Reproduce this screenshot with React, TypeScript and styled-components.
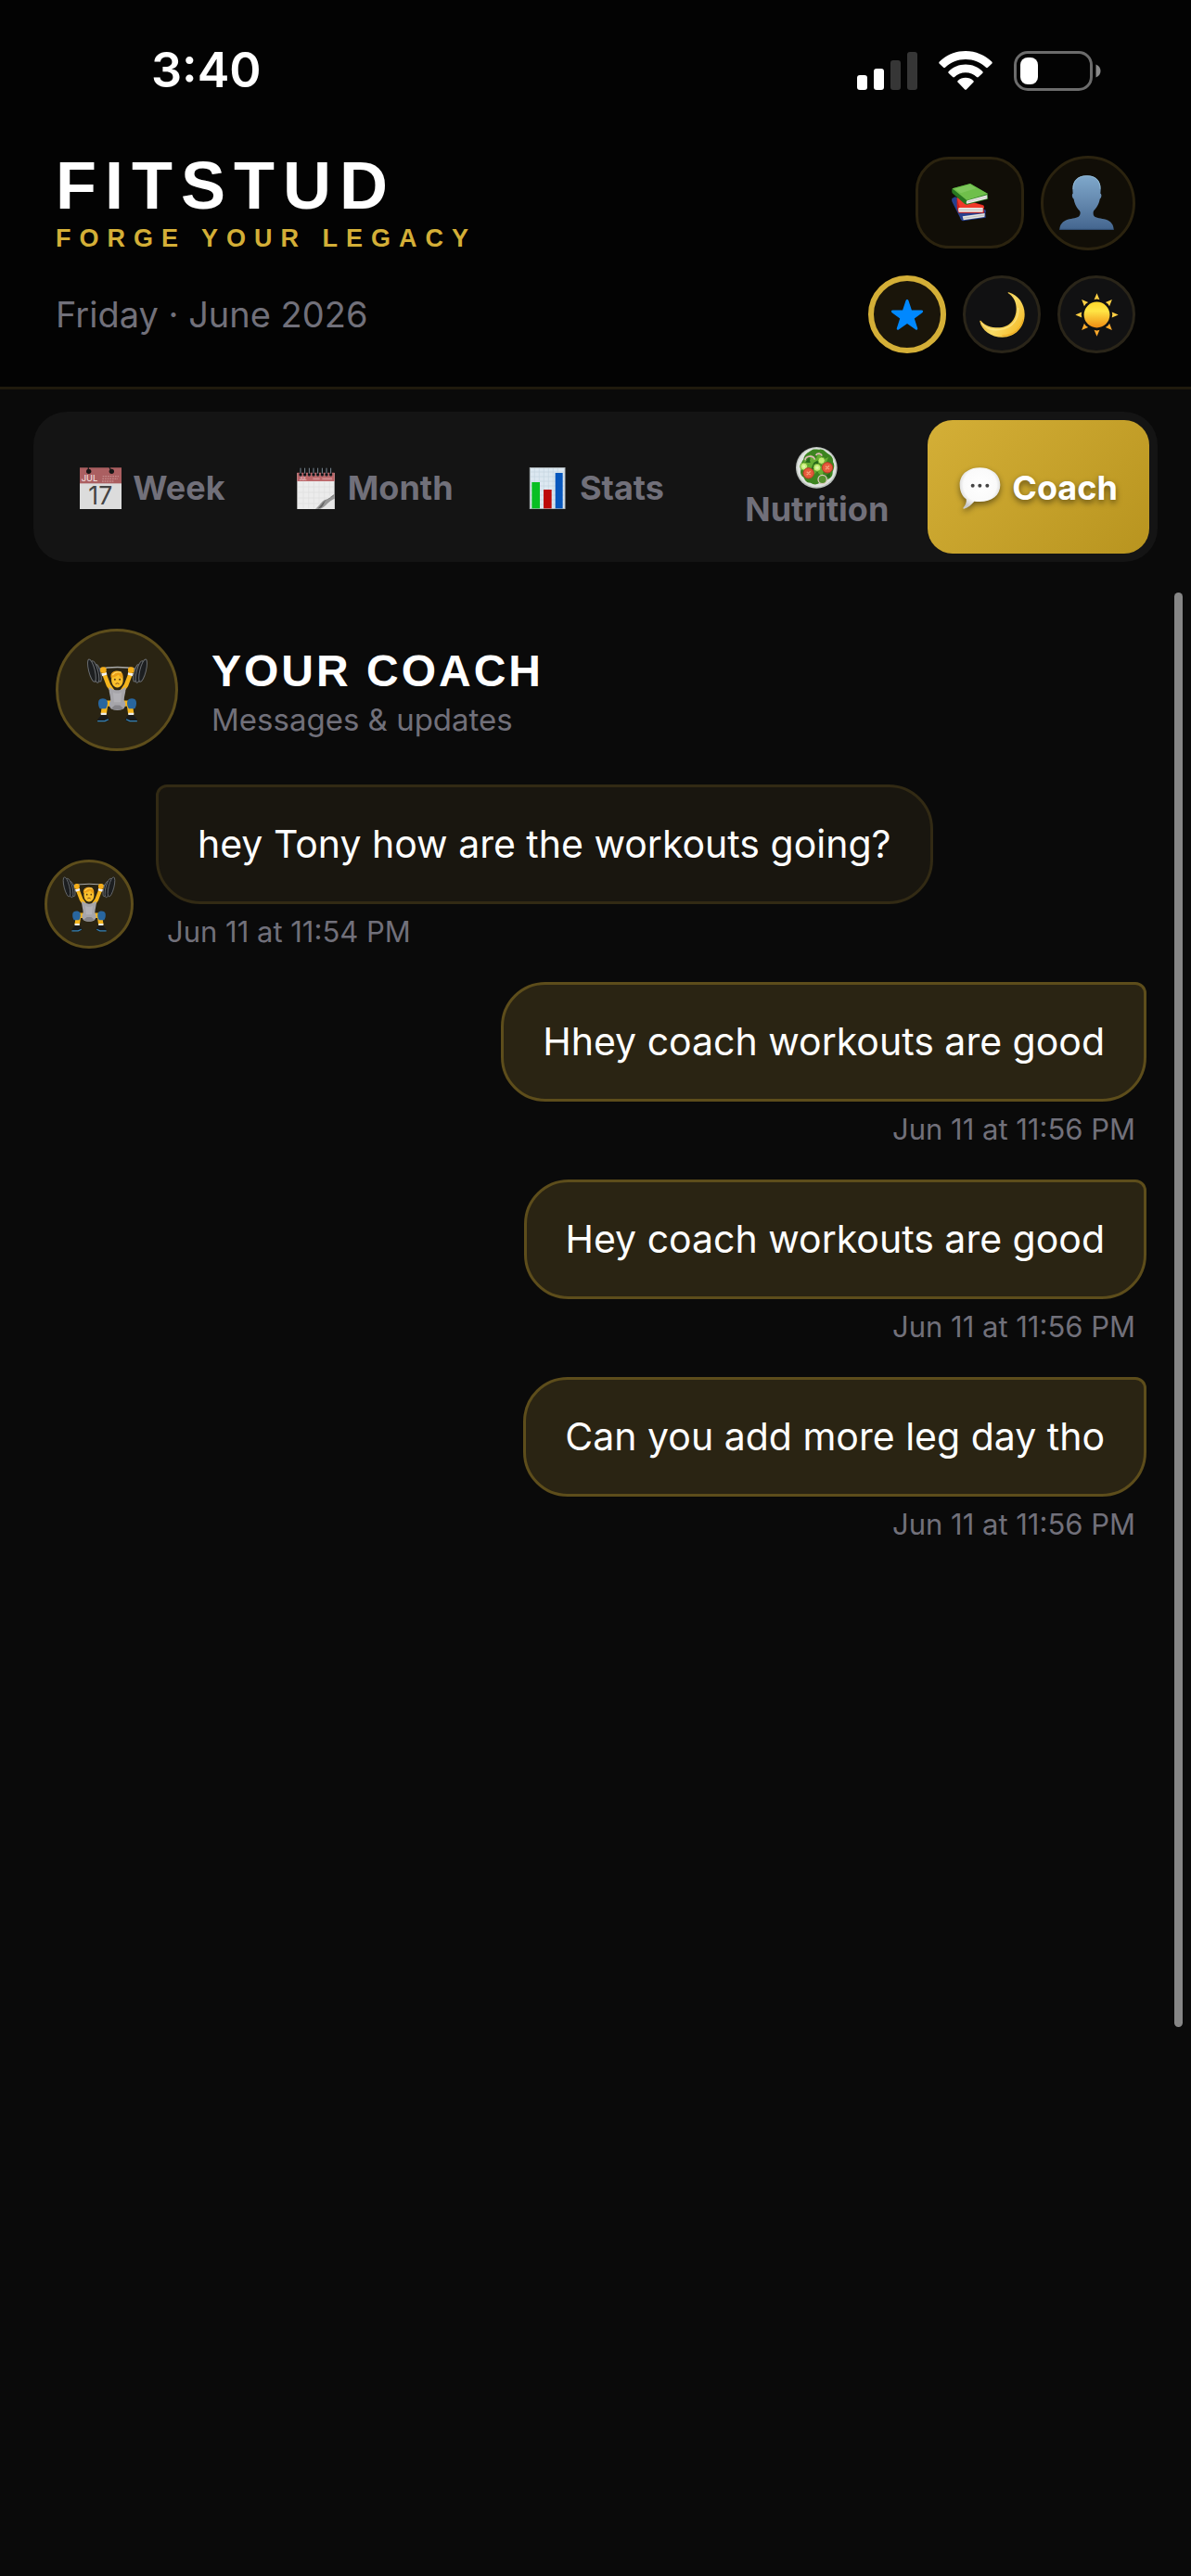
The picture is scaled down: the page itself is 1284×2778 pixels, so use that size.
import React from "react";
import styled, { createGlobalStyle, css } from "styled-components";

const sans = `Inter, "Noto Sans", sans-serif`;
const display = `"Liberation Sans", Arial, sans-serif`;
const color = {
  page: "#0a0a0a",
  header: "#030303",
  gold: "#d4af37",
  goldDark: "#b8941f",
  muted: "#71707a",
  panel: "#141414",
};

const GlobalStyle = createGlobalStyle`
  *, *::before, *::after { box-sizing: border-box; }
  body { margin: 0; background: ${color.page}; color: #fff; font-family: ${sans}; }
  h1, h2, p, ul { margin: 0; padding: 0; }
  ul { list-style: none; }
  svg { display: block; flex: none; }
`;

const Page = styled.div`
  min-height: 100vh;
  display: flex;
  flex-direction: column;
`;

/* ---------- Header ---------- */

const Header = styled.header`
  background: ${color.header};
  border-bottom: 3px solid #201a0d;
  padding-bottom: 24px;
`;

const StatusBar = styled.div`
  display: flex;
  align-items: center;
  justify-content: space-between;
  height: 152px;
  padding: 0 97px 0 163px;
`;

const Clock = styled.time`
  font-size: 52px;
  line-height: 60px;
  font-weight: 600;
`;

const StatusIcons = styled.div`
  display: flex;
  align-items: center;
  gap: 23px;
`;

const HeaderRow = styled.div`
  display: flex;
  align-items: center;
  justify-content: space-between;
  padding: 12px 60px;
`;

const Brand = styled.div`
  display: flex;
  flex-direction: column;
  gap: 6px;
  font-family: ${display};
  font-weight: 700;
  letter-spacing: 9px;
`;

const BrandName = styled.h1`
  font-size: 72px;
  line-height: 72px;
`;

const Tagline = styled.p`
  font-size: 27px;
  line-height: 31px;
  color: ${color.gold};
`;

const DateText = styled.p`
  font-size: 38px;
  line-height: 48px;
  color: ${color.muted};
`;

const Actions = styled.div`
  display: flex;
  align-items: center;
  gap: 18px;
`;

const resetButton = css`
  appearance: none;
  margin: 0;
  padding: 0;
  color: inherit;
  font-family: inherit;
  cursor: pointer;
  display: flex;
  align-items: center;
  justify-content: center;
`;

const LibraryButton = styled.button`
  ${resetButton}
  width: 117px;
  height: 99px;
  border: 3px solid #2b230f;
  border-radius: 36px;
  background: #110e07;
`;

const ProfileButton = styled.button`
  ${resetButton}
  width: 102px;
  height: 102px;
  padding-right: 3px;
  border: 3px solid #2b230f;
  border-radius: 50%;
  background: #110e07;
`;

const ThemeButton = styled.button<{ $active?: boolean }>`
  ${resetButton}
  width: 84px;
  height: 84px;
  border-radius: 50%;
  border: ${(p) => (p.$active ? `6px solid ${color.gold}` : "3px solid #2a2519")};
  background: ${(p) => (p.$active ? "#1a150a" : "#111112")};
`;

/* ---------- Tabs ---------- */

const Tabs = styled.nav`
  display: grid;
  grid-template-columns: repeat(5, 1fr);
  margin: 24px 36px 0;
  padding: 9px;
  height: 162px;
  border-radius: 36px;
  background: ${color.panel};
`;

const Tab = styled.button<{ $active?: boolean }>`
  ${resetButton}
  flex-wrap: wrap;
  align-content: center;
  column-gap: 12px;
  padding: 3px 21px 0;
  border: 0;
  border-radius: 27px;
  background: ${(p) =>
    p.$active ? `linear-gradient(135deg, ${color.gold}, ${color.goldDark})` : "transparent"};
  color: ${(p) => (p.$active ? "#fff" : color.muted)};
  font-size: 36px;
  line-height: 45px;
  font-weight: 700;
  ${(p) =>
    p.$active &&
    css`
      text-shadow: 0 3px 6px rgba(0, 0, 0, 0.5);
      svg {
        filter: drop-shadow(0 3px 3px rgba(0, 0, 0, 0.45));
      }
    `}
`;

/* ---------- Coach ---------- */

const Main = styled.main`
  position: relative;
  flex: 1;
  padding: 72px 48px 48px;
`;

const CoachHeader = styled.section`
  display: flex;
  align-items: center;
  gap: 36px;
  padding: 0 12px 36px;
`;

const Avatar = styled.div<{ $size: number }>`
  flex: none;
  display: flex;
  align-items: center;
  justify-content: center;
  width: ${(p) => p.$size}px;
  height: ${(p) => p.$size}px;
  border: 3px solid #5d4d1b;
  border-radius: 50%;
  background: #2a2413;
`;

const CoachTitle = styled.h2`
  font-family: ${display};
  font-size: 48px;
  line-height: 64px;
  font-weight: 700;
  letter-spacing: 3px;
`;

const CoachSubtitle = styled.p`
  font-size: 33px;
  line-height: 41px;
  color: ${color.muted};
`;

const Thread = styled.ul`
  display: flex;
  flex-direction: column;
  gap: 36px;
`;

const Message = styled.li<{ $mine?: boolean }>`
  display: flex;
  align-items: flex-end;
  gap: 24px;
  justify-content: ${(p) => (p.$mine ? "flex-end" : "flex-start")};
`;

const MessageBody = styled.div<{ $mine?: boolean }>`
  display: flex;
  flex-direction: column;
  gap: 12px;
  align-items: ${(p) => (p.$mine ? "flex-end" : "flex-start")};
`;

const Bubble = styled.p<{ $mine?: boolean }>`
  padding: 30px 42px;
  border: 3px solid ${(p) => (p.$mine ? "#5d4d1b" : "#322a14")};
  border-radius: ${(p) => (p.$mine ? "48px 12px 48px 48px" : "12px 48px 48px 48px")};
  background: ${(p) => (p.$mine ? "#2a2413" : "#19160f")};
  font-size: 41px;
  line-height: 63px;
`;

const Stamp = styled.time`
  padding: 0 12px;
  font-size: 31px;
  line-height: 36px;
  color: ${color.muted};
`;

const ScrollThumb = styled.div`
  position: absolute;
  top: 33px;
  right: 9px;
  bottom: 592px;
  width: 9px;
  border-radius: 5px;
  background: #868686;
`;

/* ---------- Drawings ---------- */

const SignalIcon = () => (
  <svg width="65" height="43" viewBox="0 0 65 43" aria-hidden="true">
    <rect x="0" y="26" width="11" height="16" rx="3" fill="#fff" />
    <rect x="18" y="19" width="11" height="23" rx="3" fill="#fff" />
    <rect x="36" y="10" width="11" height="32" rx="3" fill="#363636" />
    <rect x="54" y="1" width="11" height="41" rx="3" fill="#363636" />
  </svg>
);

const WifiIcon = () => (
  <svg width="58" height="43" viewBox="0 0 58 43" fill="#fff" aria-hidden="true">
    <path d="M29 0C18 0 8 4.500 .8 11.600c-.7.700-.7 1.400 0 2.100l4.300 4.100c.6.600 1.300.6 1.900 0C12.900 12.200 20.600 9 29 9s16.100 3.200 22 8.800c.6.600 1.300.6 1.900 0l4.300-4.100c.7-.7.7-1.400 0-2.100C50 4.500 40 0 29 0z" />
    <path d="M29 14.600c-7 0-13.500 2.800-18.200 7.300-.7.700-.7 1.400 0 2l4.300 4.200c.6.600 1.300.6 2 0 3.100-3 7.300-4.800 11.900-4.800s8.800 1.800 11.900 4.800c.7.600 1.400.6 2 0l4.300-4.200c.7-.6.7-1.300 0-2C42.500 17.400 36 14.600 29 14.600z" />
    <path d="M29 28.700c-3.200 0-6.100 1.200-8.300 3.200-.7.700-.6 1.300 0 1.900l7.200 7.500c.7.700 1.500.7 2.200 0l7.200-7.500c.6-.6.7-1.200 0-1.900-2.200-2-5.100-3.200-8.300-3.200z" />
  </svg>
);

const BatteryIcon = () => (
  <svg width="94" height="43" viewBox="0 0 94 43" aria-hidden="true">
    <rect x="1.500" y="1.500" width="82" height="40" rx="13.500" fill="none" stroke="#6c6c6c" strokeWidth="3" />
    <rect x="7" y="7" width="19" height="29" rx="8" fill="#fff" />
    <path d="M88.500 14.500c3.300 1.200 5 3.900 5 7s-1.700 5.800-5 7z" fill="#8a8a8a" />
  </svg>
);

const BooksIcon = () => (
  <svg width="40" height="41" viewBox="0 0 120 123" aria-hidden="true">
    <path d="M1 48l10-5 98 42 2 6-2 3 1 16-74 11c-5-2-8-7-10-13L2 60c-2-4-2-8-1-12z" fill="#27408f" />
    <path d="M35 106l72-10-1 12-68 10z" fill="#e4e4e2" />
    <path d="M36 112l71-10" stroke="#a9a9a9" strokeWidth="2" />
    <path d="M17 46l86 24 2 8-2 4 2 13H23c-5-8-6-18-6-26z" fill="#d41f17" />
    <path d="M17 46l86 26 2 6H26z" fill="#f0392b" />
    <path d="M23 78h78v14H23c-2-4-2-10 0-14z" fill="#e9e7e4" />
    <path d="M23 85h78" stroke="#adadad" strokeWidth="2" />
    <path d="M2 16L60 0l57 33-1 5 2 12-69 18c-5 0-8-3-10-5L2 31c-2-5-2-10 0-15z" fill="#27761f" />
    <path d="M2 16L60 0l57 33-68 21z" fill="#6fbf4b" />
    <path d="M10 17L59 4l20 11-49 16z" fill="#8dd06d" opacity=".5" />
    <path d="M50 55l65-18v12L49 65c-3-2-2-8 1-10z" fill="#efeeeb" />
    <path d="M50 60l64-17" stroke="#b5b5b5" strokeWidth="2" />
  </svg>
);

const ProfileIcon = () => (
  <svg width="59" height="59" viewBox="0 0 177 177" aria-hidden="true">
    <defs>
      <linearGradient id="bust" x1="0" y1="0" x2="0" y2="1">
        <stop offset="0" stopColor="#7fa8cb" />
        <stop offset=".5" stopColor="#6488ae" />
        <stop offset="1" stopColor="#44668f" />
      </linearGradient>
    </defs>
    <path
      d="M89 1c30 0 45 17 45 43 0 6-1 11-1 15 5 1 4 14-2 18-3 18-11 28-19 37-3 4-3 13 0 17 6 8 24 8 39 12 16 5 25 17 25 33H1c0-16 10-28 26-33 15-4 32-4 38-12 4-5 4-13 0-17-8-9-15-19-18-37-6-4-7-17-3-18 0-4-1-9-1-15C43 18 59 1 89 1z"
      fill="url(#bust)"
    />
    <path d="M1 175h175" stroke="#2f4e74" strokeWidth="3" />
    <path d="M45 45C45 18 60 2 89 2s43 16 43 42" fill="none" stroke="#9cc5de" strokeWidth="2" />
  </svg>
);

const StarIcon = () => (
  <svg width="36" height="36" viewBox="0 0 36 36" aria-hidden="true">
    <path
      d="M18 2c.7 0 1.200.4 1.500 1.300l3.400 10.200h10.500c2 0 2.300 1.700.9 2.700l-8.500 6.400 3.300 10.100c.6 1.800-.7 2.600-2.200 1.500L18 28l-8.900 6.200c-1.500 1.100-2.800.3-2.200-1.500l3.300-10.100-8.500-6.400c-1.400-1-1.100-2.700.9-2.700h10.500l3.400-10.200C16.800 2.400 17.300 2 18 2z"
      fill="#0088ff"
    />
  </svg>
);

const MoonIcon = () => (
  <svg width="49" height="49" viewBox="0 0 147 147" aria-hidden="true">
    <defs>
      <linearGradient id="moon" x1="0" y1=".2" x2="1" y2=".9">
        <stop offset="0" stopColor="#d79a12" />
        <stop offset=".5" stopColor="#f8dc68" />
        <stop offset="1" stopColor="#f4b51d" />
      </linearGradient>
    </defs>
    <path
      d="M95 1c31 9 51 38 51 71 0 42-31 74-72 74C37 146 7 123 1 95c-1-3 2-4 4-2 14 17 33 22 54 22 38 0 60-27 60-61 0-20-8-38-26-50-2-2-1-4 2-3z"
      fill="url(#moon)"
    />
    <path d="M6 99c15 21 38 26 62 22 38-5 60-34 57-70" fill="none" stroke="#fff0a0" strokeWidth="4" opacity=".55" />
    <path d="M141 88c-6 32-33 53-68 53" fill="none" stroke="#dd8f12" strokeWidth="3" opacity=".6" />
  </svg>
);

const SunIcon = () => (
  <svg width="47" height="47" viewBox="-71 -71 142 142" aria-hidden="true">
    <defs>
      <linearGradient id="sun" x1="0" y1="0" x2="0" y2="1">
        <stop offset="0" stopColor="#ffd52a" />
        <stop offset=".35" stopColor="#ffe545" />
        <stop offset="1" stopColor="#f08b12" />
      </linearGradient>
    </defs>
    <circle r="42" fill="url(#sun)" />
    {[0, 45, 90, 135, 180, 225, 270, 315].map((angle) => (
      <path
        key={angle}
        d="M0-70l9 21q-9-4-18 0z"
        transform={`rotate(${angle})`}
        fill={angle > 90 && angle < 270 ? "#fba92b" : "#ffd044"}
      />
    ))}
  </svg>
);

const WeekIcon = () => (
  <svg width="45" height="45" viewBox="0 0 135 135" aria-hidden="true">
    <rect width="135" height="135" fill="#dcdcdc" />
    <rect width="135" height="52" fill="#ab5f61" />
    <path d="M0 1h135" stroke="#7b4648" strokeWidth="3" />
    <path d="M28 0v12M96 0l6 12" stroke="#222" strokeWidth="4" />
    <circle cx="29" cy="13" r="8" fill="#151515" />
    <circle cx="103" cy="13" r="8" fill="#151515" />
    <path d="M74 29h52M73 37h50M72 45h40" stroke="#c58a8b" strokeWidth="4" strokeDasharray="5 3" />
    <text x="5" y="46" fontFamily="Inter, sans-serif" fontSize="28" fontWeight="500" fill="#efdcdc">JUL</text>
    <text x="67" y="121" textAnchor="middle" fontFamily="Inter, sans-serif" fontSize="80" fontWeight="400" fill="#444">17</text>
  </svg>
);

const MonthIcon = () => (
  <svg width="45" height="45" viewBox="0 0 135 135" aria-hidden="true">
    <path d="M7 18h121v117H7z" fill="#ececec" />
    <path d="M7 17h121v28H7z" fill="#bb6669" />
    <path d="M10 63h116M10 81h116M10 99h116M10 117h80M27 46v87M44 46v87M61 46v87M78 46v80M95 46v60M112 46v45" stroke="#dedede" strokeWidth="2" />
    <text x="14" y="42" fontFamily="Inter, sans-serif" fontSize="13" fontWeight="600" fill="#e6c4c5">JUL</text>
    <path d="M58 37h22M88 37h32" stroke="#d08f91" strokeWidth="5" />
    <path d="M128 86c-14 8-16 15-31 19-12 5-17 20-31 29h62z" fill="#989898" />
    <path d="M128 101c-20 8-28 25-46 34h46z" fill="#e7e7e7" />
    <path d="M128 87c-12 15-29 14-34 29-3 9-10 16-21 18 17-14 18-25 30-29 13-5 16-12 25-18z" fill="#4c4c4c" opacity=".7" />
    {[18, 32, 46, 60, 74, 88, 102, 116].map((x) => (
      <g key={x}>
        <circle cx={x} cy="24" r="5" fill="#232b30" />
        <path d={`M${x} 2v23`} stroke="#090b0d" strokeWidth="7" />
        <path d={`M${x} 2v18`} stroke="#84929c" strokeWidth="3" />
      </g>
    ))}
  </svg>
);

const StatsIcon = () => (
  <svg width="45" height="45" viewBox="0 0 135 135" aria-hidden="true">
    <rect x="10" y="1" width="113" height="133" fill="#dce8f1" stroke="#aeb5b9" strokeWidth="3" />
    <path d="M12 15h109M12 30h109M12 45h109M12 60h109M12 75h109M12 90h109M12 105h109M12 120h109M25 3v130M40 3v130M55 3v130M70 3v130M85 3v130M100 3v130" stroke="#c5d5e0" strokeWidth="2" />
    <rect x="16" y="48" width="26" height="85" fill="#08bf22" />
    <rect x="54" y="72" width="26" height="61" fill="#bd0909" />
    <rect x="92" y="18" width="24" height="115" fill="#0757bd" />
  </svg>
);

const SaladIcon = () => (
  <svg width="45" height="45" viewBox="0 0 135 135" aria-hidden="true">
    <circle cx="67" cy="67" r="67" fill="#b9bfba" />
    <circle cx="67" cy="66" r="63" fill="#dfe3df" />
    <path d="M49 12c9-8 20-2 28-4 13-2 18 8 27 14 11 6 18 15 16 26 7 12 3 22-1 32 1 15-8 21-16 25-9 14-16 16-28 12-11 8-20 3-28-1-14 0-18-10-22-18-12-7-11-18-8-28-4-14 3-22 8-30 1-14 13-22 24-28z" fill="#3c8420" />
    <path d="M46 23l19 15 11-22 9 26 21-9-11 24 20 16-25-2-4 27-18-19-20 24-3-25-22 1 18-20-19-15 25-2z" fill="#65ad32" />
    <path d="M58 51l20-12 5 20-12 24-21-13zM30 50l13-16 4 17zM94 95l16-12 1 17z" fill="#26691a" />
    <path d="M30 43c1-16 28-17 31-2M65 27c5-9 18-6 19 2" fill="none" stroke="#dfb7b6" strokeWidth="5" />
    <circle cx="86" cy="105" r="14" fill="#55912e" stroke="#d9c7bc" strokeWidth="4" />
    <g fill="#c4ed77" stroke="#6fae31" strokeWidth="3">
      <circle cx="26" cy="63" r="12" />
      <circle cx="83" cy="44" r="11" />
      <circle cx="69" cy="67" r="12" />
    </g>
    <g fill="#e65a3c" stroke="#bd3727" strokeWidth="3">
      <circle cx="41" cy="85" r="17" />
      <circle cx="102" cy="67" r="17" />
    </g>
    <path d="M35 80l12 10M47 79l-12 12M96 62l12 10M108 61L96 73" stroke="#f4a37c" strokeWidth="4" />
    <circle cx="26" cy="63" r="5" fill="#e0f7a9" />
    <circle cx="69" cy="67" r="5" fill="#e0f7a9" />
  </svg>
);

const ChatIcon = () => (
  <svg width="45" height="45" viewBox="0 0 135 135" aria-hidden="true">
    <defs>
      <radialGradient id="speech" cx=".5" cy=".42" r=".58">
        <stop offset="0" stopColor="#fff" />
        <stop offset=".7" stopColor="#fafafa" />
        <stop offset="1" stopColor="#c9c9c9" />
      </radialGradient>
    </defs>
    <path
      d="M67 1c38 0 66 22 66 56s-27 54-66 54c-7 0-13 0-18-1-9 11-20 20-33 24-3 1-4-2-2-4 7-8 11-18 9-27C9 93 2 76 2 57 2 23 29 1 67 1z"
      fill="url(#speech)"
    />
    <g fill="#454545">
      <circle cx="44" cy="59" r="6" />
      <circle cx="67" cy="59" r="6" />
      <circle cx="91" cy="59" r="6" />
    </g>
  </svg>
);

const LifterIcon = ({ size }: { size: number }) => (
  <svg width={size} height={size} viewBox="36 36 204 210" aria-hidden="true">
    <path d="M72 72Q138 58 206 72" fill="none" stroke="#a9aaa9" strokeWidth="4" />
    <path d="M70 74l14-3M192 71l14 3" stroke="#2b5e9c" strokeWidth="7" />
    <g fill="#1c1e20" stroke="#6a6d70" strokeWidth="3">
      <ellipse cx="75" cy="84" rx="8" ry="29" transform="rotate(-14 75 84)" />
      <ellipse cx="65" cy="80" rx="10" ry="37" transform="rotate(-14 65 80)" />
      <ellipse cx="54" cy="76" rx="10" ry="38" transform="rotate(-14 54 76)" />
      <ellipse cx="201" cy="84" rx="8" ry="29" transform="rotate(14 201 84)" />
      <ellipse cx="211" cy="80" rx="10" ry="37" transform="rotate(14 211 80)" />
      <ellipse cx="222" cy="76" rx="10" ry="38" transform="rotate(14 222 76)" />
    </g>
    <path d="M93 82l16 42 14 20M183 82l-16 42-14 20" fill="none" stroke="#f5b51c" strokeWidth="14" strokeLinejoin="round" />
    <path d="M87 90l16-5M173 85l16 5" stroke="#f2f2f2" strokeWidth="9" />
    <rect x="82" y="64" width="20" height="20" rx="8" fill="#f4ad19" />
    <rect x="173" y="64" width="20" height="20" rx="8" fill="#f4ad19" />
    <path d="M122 184H98l-5 35M154 184h24l5 35" fill="none" stroke="#f5b51c" strokeWidth="19" strokeLinejoin="round" />
    <path d="M111 130c8 4 14 10 27 10s19-6 27-10c2 16-5 29-5 44 6 8 6 18-1 27-11 7-31 7-42 0-7-9-7-19-1-27 0-15-7-28-5-44z" fill="#a6a5aa" />
    <path d="M124 146c7 7 21 7 28 0l-3 34h-22z" fill="#bab9be" opacity=".6" />
    <path d="M118 200c10 7 30 7 40 0l-12-10h-16z" fill="#858489" />
    <path d="M76 178c1-12 22-14 28-4 4 9 1 21-4 27H81c-5-7-6-15-5-23zM200 178c-1-12-22-14-28-4-4 9-1 21 4 27h19c5-7 6-15 5-23z" fill="#28669f" />
    <path d="M84 218h18M174 218h18" stroke="#e9ecef" strokeWidth="7" />
    <path d="M84 223h19l9 12-4 7H74l-1-6zM192 223h-19l-9 12 4 7h34l1-6z" fill="#17191b" />
    <path d="M73 242h24l12-6M203 242h-24l-12-6" fill="none" stroke="#3482b7" strokeWidth="4" />
    <path d="M119 98c0-25 37-25 37 0 4 19-5 34-18 34s-22-15-19-34z" fill="#f9c02c" />
    <path d="M117 99c-3-17 10-22 21-22 14 0 21 10 18 24-7-2-11-7-14-12-7 7-15 7-22 10z" fill="#eba018" />
    <path d="M122 91c8-10 20-12 29-8" fill="none" stroke="#ffd55c" strokeWidth="4" />
    <circle cx="130" cy="105" r="3" fill="#5c3c1a" />
    <circle cx="146" cy="105" r="3" fill="#5c3c1a" />
    <path d="M132 120q6-5 12 0" fill="none" stroke="#7d4a1d" strokeWidth="3" />
  </svg>
);

/* ---------- Page data ---------- */

const tabs = [
  { label: "Week", Icon: WeekIcon },
  { label: "Month", Icon: MonthIcon },
  { label: "Stats", Icon: StatsIcon },
  { label: "Nutrition", Icon: SaladIcon },
  { label: "Coach", Icon: ChatIcon, active: true },
];

const messages = [
  { text: "hey Tony how are the workouts going?", time: "Jun 11 at 11:54 PM", mine: false },
  { text: "Hhey coach workouts are good", time: "Jun 11 at 11:56 PM", mine: true },
  { text: "Hey coach workouts are good", time: "Jun 11 at 11:56 PM", mine: true },
  { text: "Can you add more leg day tho", time: "Jun 11 at 11:56 PM", mine: true },
];

export default function App() {
  return (
    <Page>
      <GlobalStyle />
      <Header>
        <StatusBar>
          <Clock>3:40</Clock>
          <StatusIcons>
            <SignalIcon />
            <WifiIcon />
            <BatteryIcon />
          </StatusIcons>
        </StatusBar>
        <HeaderRow>
          <Brand>
            <BrandName>FITSTUD</BrandName>
            <Tagline>FORGE YOUR LEGACY</Tagline>
          </Brand>
          <Actions>
            <LibraryButton aria-label="Library"><BooksIcon /></LibraryButton>
            <ProfileButton aria-label="Profile"><ProfileIcon /></ProfileButton>
          </Actions>
        </HeaderRow>
        <HeaderRow>
          <DateText>Friday · June 2026</DateText>
          <Actions>
            <ThemeButton $active aria-label="Gold theme" aria-pressed="true"><StarIcon /></ThemeButton>
            <ThemeButton aria-label="Dark theme" aria-pressed="false"><MoonIcon /></ThemeButton>
            <ThemeButton aria-label="Light theme" aria-pressed="false"><SunIcon /></ThemeButton>
          </Actions>
        </HeaderRow>
      </Header>
      <Tabs aria-label="Sections">
        {tabs.map(({ label, Icon, active }) => (
          <Tab key={label} $active={active} aria-current={active ? "page" : undefined}>
            <Icon />
            <span>{label}</span>
          </Tab>
        ))}
      </Tabs>
      <Main>
        <CoachHeader>
          <Avatar $size={132}><LifterIcon size={69} /></Avatar>
          <div>
            <CoachTitle>YOUR COACH</CoachTitle>
            <CoachSubtitle>Messages &amp; updates</CoachSubtitle>
          </div>
        </CoachHeader>
        <Thread>
          {messages.map((message) => (
            <Message key={message.text} $mine={message.mine}>
              {!message.mine && <Avatar $size={96}><LifterIcon size={60} /></Avatar>}
              <MessageBody $mine={message.mine}>
                <Bubble $mine={message.mine}>{message.text}</Bubble>
                <Stamp>{message.time}</Stamp>
              </MessageBody>
            </Message>
          ))}
        </Thread>
        <ScrollThumb />
      </Main>
    </Page>
  );
}
